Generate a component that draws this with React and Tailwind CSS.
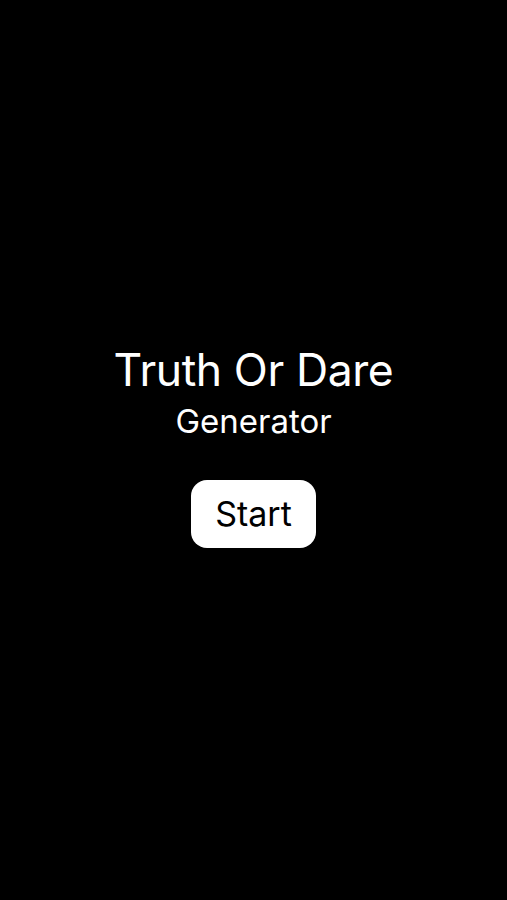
export default function App() {
  return (
    <div
      className="w-full h-[900px] bg-black text-white flex flex-col items-center justify-center pb-[10px]"
      style={{ fontFamily: "Inter, 'Noto Sans', sans-serif" }}
    >
      <h1 className="text-[44.5px] leading-[54px] font-normal tracking-[-0.4px]">Truth Or Dare</h1>
      <p className="text-[33px] leading-[48px] font-normal">Generator</p>
      <button className="mt-[35px] w-[125px] h-[68px] rounded-[16px] bg-white text-black text-[34px] flex items-center justify-center">
        Start
      </button>
    </div>
  );
}
